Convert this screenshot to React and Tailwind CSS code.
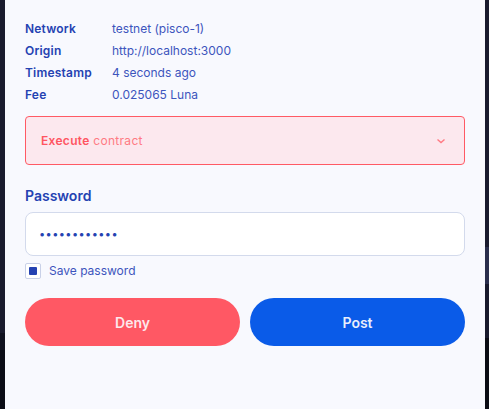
import React from "react";

export default function App() {
  return (
    <div className="flex h-[409px] w-[489px] bg-[#181a2d]" style={{ fontFamily: "Inter, 'Noto Sans', sans-serif" }}>
      <div className="flex w-[5px] flex-col">
        <div className="h-[333px] bg-[#1a1b2e]" />
        <div className="h-[17px] bg-[#101220]" />
        <div className="flex-1 bg-[#0b0c16]" />
      </div>
      <div className="flex w-[480px] flex-col bg-[#f8f9fe] px-5 pt-[21px]">
        <div className="grid grid-cols-[87px_1fr] gap-y-[6px] text-[12px] leading-[16px]">
          <div className="font-semibold tracking-[0.2px] text-[#2442b2]">Network</div>
          <div className="text-[#3d55bd]">testnet (pisco-1)</div>
          <div className="font-semibold tracking-[0.2px] text-[#2442b2]">Origin</div>
          <div className="text-[#3d55bd]">http://localhost:3000</div>
          <div className="font-semibold tracking-[0.2px] text-[#2442b2]">Timestamp</div>
          <div className="text-[#3d55bd]">4 seconds ago</div>
          <div className="font-semibold tracking-[0.2px] text-[#2442b2]">Fee</div>
          <div className="text-[#3d55bd]">0.025065 Luna</div>
        </div>
        <div className="mt-[13px] flex h-[49px] items-center justify-between rounded-[4px] border border-[#ff5a64] bg-[#fce8ee] pl-[15px] pr-[18px] text-[12px] tracking-[0.3px]">
          <div>
            <span className="font-semibold text-[#ff5561]">Execute</span>{" "}
            <span className="text-[#ff7a83]">contract</span>
          </div>
          <svg width="10" height="6" viewBox="0 0 10 6" fill="none">
            <path d="M1.5 1.5 L5 4.5 L8.5 1.5" stroke="#ff7a83" strokeWidth="1.4" />
          </svg>
        </div>
        <div className="mt-[22px] text-[14px] font-semibold leading-[18px] text-[#2442b2]">Password</div>
        <div className="mt-[7px] flex h-[44px] items-center rounded-[8px] border border-[#d3daec] bg-white px-[13px] text-[11px] tracking-[0.4px] text-[#2442b2]">
          ••••••••••••
        </div>
        <div className="mt-[6px] flex items-center gap-[8px]">
          <div className="flex h-[16px] w-[16px] items-center justify-center rounded-[2px] border border-[#c9d1e8] bg-white">
            <div className="h-[8px] w-[8px] rounded-[1px] bg-[#2442b2]" />
          </div>
          <span className="text-[12px] text-[#3d55bd]">Save password</span>
        </div>
        <div className="mt-[18px] flex gap-[10px]">
          <button className="flex h-[48px] flex-1 items-center justify-center rounded-full bg-[#ff5864] text-[14px] font-semibold text-[#fde8ec]">
            Deny
          </button>
          <button className="flex h-[48px] flex-1 items-center justify-center rounded-full bg-[#0a5be8] text-[14px] font-semibold text-[#e8eefc]">
            Post
          </button>
        </div>
      </div>
      <div className="flex w-[4px] flex-col">
        <div className="h-[247px] bg-[#1a1b2e]" />
        <div className="h-[37px] bg-[#2a2e4c]" />
        <div className="h-[54px] bg-[#181a2c]" />
        <div className="flex-1 bg-[#0b0c14]" />
      </div>
    </div>
  );
}
